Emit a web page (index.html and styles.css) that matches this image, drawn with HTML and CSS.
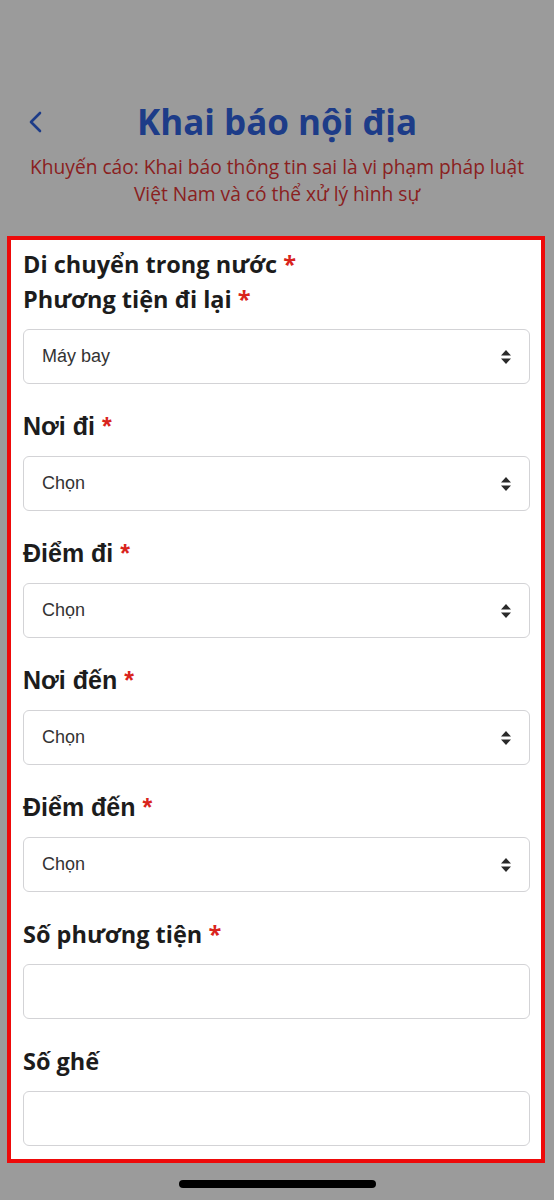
FILE: index.html
```html
<!DOCTYPE html>
<html lang="vi">
<head>
<meta charset="utf-8">
<title>Khai báo nội địa</title>
<link rel="stylesheet" href="styles.css">
</head>
<body>
<div class="screen">
  <header class="top">
    <div class="title-row">
      <svg class="back" width="16" height="22" viewBox="0 0 16 22"><path d="M12 2 L3 11 L12 20" fill="none" stroke="#1d3c88" stroke-width="2.6" stroke-linecap="round" stroke-linejoin="round"/></svg>
      <h1 class="title">Khai báo nội địa</h1>
    </div>
    <p class="warning">Khuyến cáo: Khai báo thông tin sai là vi phạm pháp luật<br>Việt Nam và có thể xử lý hình sự</p>
  </header>

  <form class="form">
    <div class="section">Di chuyển trong nước <span class="req">*</span></div>
    <div class="field">
      <div class="label os">Phương tiện đi lại <span class="req">*</span></div>
      <div class="select"><span>Máy bay</span><svg class="arrows" width="12" height="16" viewBox="0 0 12 16"><path d="M6 1 L11 6.5 H1 Z M6 15 L11 9.5 H1 Z" fill="#2a2a2a"/></svg></div>
    </div>
    <div class="field">
      <div class="label sf">Nơi đi <span class="req">*</span></div>
      <div class="select"><span>Chọn</span><svg class="arrows" width="12" height="16" viewBox="0 0 12 16"><path d="M6 1 L11 6.5 H1 Z M6 15 L11 9.5 H1 Z" fill="#2a2a2a"/></svg></div>
    </div>
    <div class="field">
      <div class="label sf">Điểm đi <span class="req">*</span></div>
      <div class="select"><span>Chọn</span><svg class="arrows" width="12" height="16" viewBox="0 0 12 16"><path d="M6 1 L11 6.5 H1 Z M6 15 L11 9.5 H1 Z" fill="#2a2a2a"/></svg></div>
    </div>
    <div class="field">
      <div class="label sf">Nơi đến <span class="req">*</span></div>
      <div class="select"><span>Chọn</span><svg class="arrows" width="12" height="16" viewBox="0 0 12 16"><path d="M6 1 L11 6.5 H1 Z M6 15 L11 9.5 H1 Z" fill="#2a2a2a"/></svg></div>
    </div>
    <div class="field">
      <div class="label sf">Điểm đến <span class="req">*</span></div>
      <div class="select"><span>Chọn</span><svg class="arrows" width="12" height="16" viewBox="0 0 12 16"><path d="M6 1 L11 6.5 H1 Z M6 15 L11 9.5 H1 Z" fill="#2a2a2a"/></svg></div>
    </div>
    <div class="field">
      <div class="label os">Số phương tiện <span class="req">*</span></div>
      <div class="input"></div>
    </div>
    <div class="field last">
      <div class="label os">Số ghế</div>
      <div class="input"></div>
    </div>
  </form>

  <div class="home-bar"></div>
</div>
</body>
</html>
```

FILE: styles.css
```css
* { box-sizing: border-box; }
html, body {
  margin: 0;
  padding: 0;
  background: #9b9b9b;
}
.screen {
  width: 554px;
  height: 1200px;
  background: #9b9b9b;
  padding-top: 98px;
  font-family: "Open Sans", "Liberation Sans", sans-serif;
}
.top {
  display: flex;
  flex-direction: column;
  align-items: center;
}
.title-row {
  position: relative;
  width: 100%;
  display: flex;
  justify-content: center;
  height: 48px;
  align-items: center;
}
.back {
  position: absolute;
  left: 28px;
  top: 13px;
}
.title {
  margin: 0;
  font-family: "Open Sans", sans-serif;
  font-weight: 700;
  font-size: 35px;
  line-height: 48px;
  color: #1d3c88;
}
.warning {
  margin: 7px 0 0;
  text-align: center;
  font-family: "Open Sans", sans-serif;
  font-size: 19.2px;
  line-height: 27px;
  color: #8a2020;
}
.form {
  margin: 29px 9px 0 7px;
  background: #fff;
  border: 4px solid #ee0a0a;
  padding: 9px 11px 13px 12px;
}
.section, .label {
  font-size: 23.5px;
  font-weight: 700;
  line-height: 30px;
  color: #1c1c1c;
  white-space: nowrap;
}
.section { margin-bottom: 5px; font-family: "Open Sans", sans-serif; }
.label.os { font-family: "Open Sans", sans-serif; }
.label.sf { font-family: "Liberation Sans", Arial, sans-serif; font-size: 25px; }
.req { color: #d9241c; }
.label { margin-bottom: 15px; }
.field { margin-bottom: 27px; }
.field.last { margin-bottom: 0; }
.select, .input {
  height: 55px;
  border: 1.5px solid #d3d3d6;
  border-radius: 6px;
  background: #fff;
}
.select {
  display: flex;
  align-items: center;
  justify-content: space-between;
  padding: 0 17px 0 18px;
  font-family: "Liberation Sans", Arial, sans-serif;
  font-size: 18px;
  color: #333;
}
.arrows { display: block; }
.home-bar {
  width: 197px;
  height: 8px;
  border-radius: 4px;
  background: #000;
  margin: 17px auto 0;
}
```
